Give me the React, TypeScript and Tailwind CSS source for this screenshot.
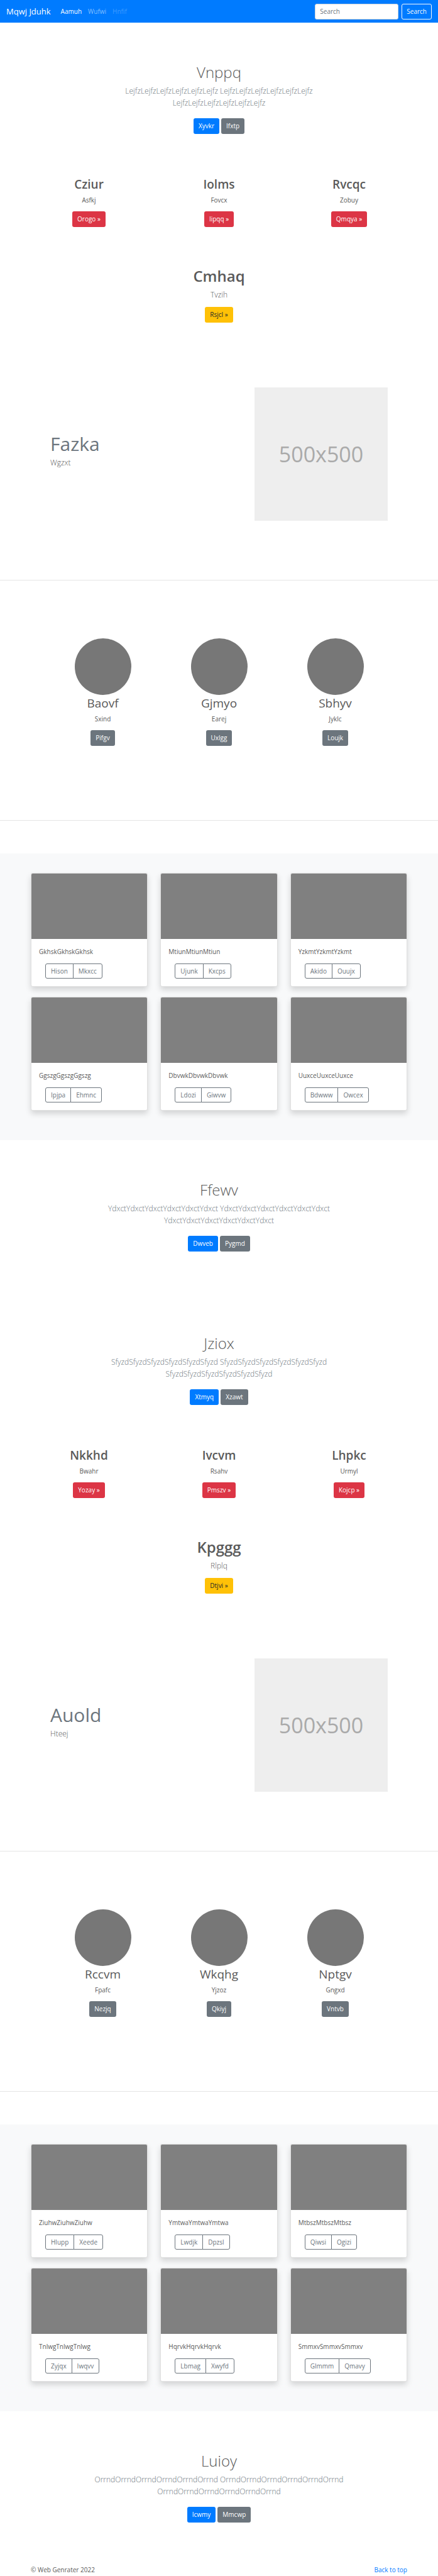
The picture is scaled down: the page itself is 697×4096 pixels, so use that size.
import type { ReactNode } from "react";

type Hero = { title: string; word: string; primary: string; secondary: string };
type Item = { title: string; text: string; action: string };
type Card = { text: string; left: string; right: string };
type Block = {
  hero: Hero;
  columns: Item[];
  callout: Item;
  feature: { title: string; text: string };
  people: Item[];
  cards: Card[];
  closing: Hero;
};

const blocks: Block[] = [
  {
    hero: { title: "Vnppq", word: "Lejfz", primary: "Xyvkr", secondary: "Ifxtp" },
    columns: [
      { title: "Cziur", text: "Asfkj", action: "Orogo" },
      { title: "Iolms", text: "Fovcx", action: "Iipqq" },
      { title: "Rvcqc", text: "Zobuy", action: "Qmqya" },
    ],
    callout: { title: "Cmhaq", text: "Tvzih", action: "Rsjcl" },
    feature: { title: "Fazka", text: "Wgzxt" },
    people: [
      { title: "Baovf", text: "Sxind", action: "Pifgv" },
      { title: "Gjmyo", text: "Earej", action: "Uxlgg" },
      { title: "Sbhyv", text: "Jyklc", action: "Loujk" },
    ],
    cards: [
      { text: "GkhskGkhskGkhsk", left: "Hison", right: "Mkxcc" },
      { text: "MtiunMtiunMtiun", left: "Ujunk", right: "Kxcps" },
      { text: "YzkmtYzkmtYzkmt", left: "Akido", right: "Ouujx" },
      { text: "GgszgGgszgGgszg", left: "Ipjpa", right: "Ehmnc" },
      { text: "DbvwkDbvwkDbvwk", left: "Ldozi", right: "Giwvw" },
      { text: "UuxceUuxceUuxce", left: "Bdwww", right: "Owcex" },
    ],
    closing: { title: "Ffewv", word: "Ydxct", primary: "Dwveb", secondary: "Pygmd" },
  },
  {
    hero: { title: "Jziox", word: "Sfyzd", primary: "Xtmyq", secondary: "Xzawt" },
    columns: [
      { title: "Nkkhd", text: "Bwahr", action: "Yozay" },
      { title: "Ivcvm", text: "Rsahv", action: "Pmszv" },
      { title: "Lhpkc", text: "Urmyl", action: "Kojcp" },
    ],
    callout: { title: "Kpggg", text: "Rlplq", action: "Dtjvi" },
    feature: { title: "Auold", text: "Hteej" },
    people: [
      { title: "Rccvm", text: "Fpafc", action: "Nezjq" },
      { title: "Wkqhg", text: "Yjzoz", action: "Qkiyj" },
      { title: "Nptgv", text: "Gngxd", action: "Vntvb" },
    ],
    cards: [
      { text: "ZiuhwZiuhwZiuhw", left: "Hlupp", right: "Xeede" },
      { text: "YmtwaYmtwaYmtwa", left: "Lwdjk", right: "Dpzsl" },
      { text: "MtbszMtbszMtbsz", left: "Qiwsi", right: "Ogizi" },
      { text: "TnlwgTnlwgTnlwg", left: "Zyjqx", right: "Iwqvv" },
      { text: "HqrvkHqrvkHqrvk", left: "Lbmag", right: "Xwyfd" },
      { text: "SmmxvSmmxvSmmxv", left: "Glmmm", right: "Qmavy" },
    ],
    closing: { title: "Luioy", word: "Orrnd", primary: "Icwmy", secondary: "Mmcwp" },
  },
];

const tones = {
  primary: "bg-[#007bff] text-white",
  secondary: "bg-[#6c757d] text-white",
  danger: "bg-[#dc3545] text-white",
  warning: "bg-[#ffc107] text-[#212529]",
};

function LinkButton({ tone, children }: { tone: keyof typeof tones; children: ReactNode }) {
  return (
    <a href="#" className={`inline-block rounded-[3px] px-2 leading-[25px] ${tones[tone]}`}>
      {children}
    </a>
  );
}

function Navbar() {
  return (
    <nav className="flex h-9 items-center bg-[#007bff] px-2.5 text-white">
      <a href="#" className="mr-4 text-[13px]">Mqwj Jduhk</a>
      <div className="flex flex-1 gap-2.5">
        <a href="#">Aamuh</a>
        <a href="#" className="text-white/50">Wufwi</a>
        <a href="#" className="text-white/25">Hnfif</a>
      </div>
      <form className="flex gap-[5px]">
        <input
          type="search"
          aria-label="Search"
          placeholder="Search"
          className="h-[25px] w-[133px] rounded-[3px] border border-[#ced4da] bg-white px-[7px] text-[#495057] placeholder:text-[#6c757d]"
        />
        <button type="button" className="h-[25px] rounded-[3px] border border-[#f8f9fa] px-[7px] text-[#f8f9fa]">
          Search
        </button>
      </form>
    </nav>
  );
}

function HeroSection({ title, word, primary, secondary }: Hero) {
  const long = word.repeat(6);
  return (
    <section className="flex flex-col items-center px-4 pt-[63px] pb-[67px] text-center">
      <h1 className="mb-[5px] text-[24px] leading-[31px] font-light">{title}</h1>
      <p className="mb-[15px] max-w-[430px] text-[12px] leading-[19px] font-light text-[#6c757d]">
        {long} {long} {long}
      </p>
      <div className="flex gap-[3px]">
        <LinkButton tone="primary">{primary}</LinkButton>
        <LinkButton tone="secondary">{secondary}</LinkButton>
      </div>
    </section>
  );
}

function Columns({ items }: { items: Item[] }) {
  return (
    <section className="grid grid-cols-3 px-[38px] pt-px text-center">
      {items.map((item) => (
        <div key={item.title}>
          <h2 className="mb-[5px] text-[19px] leading-[25px] font-semibold">{item.title}</h2>
          <p className="mb-2.5">{item.text}</p>
          <LinkButton tone="danger">{item.action} »</LinkButton>
        </div>
      ))}
    </section>
  );
}

function Callout({ title, text, action }: Item) {
  return (
    <section className="mt-[62px] text-center">
      <h1 className="mb-[5px] text-[24px] leading-[31px] font-semibold">{title}</h1>
      <p className="mb-2.5 text-[12px] leading-[19px] font-light">{text}</p>
      <LinkButton tone="warning">{action} »</LinkButton>
    </section>
  );
}

function Feature({ title, text }: { title: string; text: string }) {
  return (
    <section className="mt-[103px] flex items-center justify-between px-20">
      <div className="pb-[13px]">
        <h2 className="mb-[3px] text-[30px] leading-[37px] text-[#6c757d]">{title}</h2>
        <p className="text-[12px] leading-[18px] font-light">{text}</p>
      </div>
      <div className="flex aspect-square w-[212px] items-center justify-center bg-[#eee] text-[34px] text-[#aaa]">
        500x500
      </div>
    </section>
  );
}

function People({ items }: { items: Item[] }) {
  return (
    <section className="mt-[92px] grid grid-cols-3 px-[71px] text-center">
      {items.map((item) => (
        <div key={item.title}>
          <div className="mx-auto size-[90px] rounded-full bg-[#777]" />
          <h2 className="mb-1 text-[19px] leading-[27px]">{item.title}</h2>
          <p className="mb-2.5">{item.text}</p>
          <LinkButton tone="secondary">{item.action}</LinkButton>
        </div>
      ))}
    </section>
  );
}

function Album({ cards }: { cards: Card[] }) {
  return (
    <section className="mt-[52px] grid grid-cols-3 gap-x-5 gap-y-4 bg-[#f8f9fa] px-[49px] pt-[31px] pb-[47px]">
      {cards.map((card) => (
        <article
          key={card.text}
          className="overflow-hidden rounded-[3px] border border-black/12 bg-white shadow-[0_5px_10px_rgba(0,0,0,0.15)]"
        >
          <div className="h-[104px] bg-[#808080]" />
          <div className="px-3 pt-[13px] pb-3">
            <p className="mb-[11px]">{card.text}</p>
            <div className="ml-2.5 flex text-[#6c757d]">
              <button type="button" className="h-6 rounded-l-[3px] border border-[#6c757d] px-2">
                {card.left}
              </button>
              <button type="button" className="-ml-px h-6 rounded-r-[3px] border border-[#6c757d] px-2">
                {card.right}
              </button>
            </div>
          </div>
        </article>
      ))}
    </section>
  );
}

export default function App() {
  return (
    <div className="bg-white font-['Open_Sans','Noto_Sans',sans-serif] text-[10px] leading-[15px] text-[#5a5a5a]">
      <Navbar />
      <main>
        {blocks.map((block) => (
          <div key={block.hero.title}>
            <HeroSection {...block.hero} />
            <Columns items={block.columns} />
            <Callout {...block.callout} />
            <Feature {...block.feature} />
            <hr className="mt-[94px] border-[#e5e5e5]" />
            <People items={block.people} />
            <hr className="mt-[118px] border-[#e5e5e5]" />
            <Album cards={block.cards} />
            <HeroSection {...block.closing} />
          </div>
        ))}
      </main>
      <footer className="flex justify-between px-[49px] pb-0.5 leading-4">
        <p>© Web Genrater 2022</p>
        <a href="#" className="text-[#007bff]">Back to top</a>
      </footer>
    </div>
  );
}
